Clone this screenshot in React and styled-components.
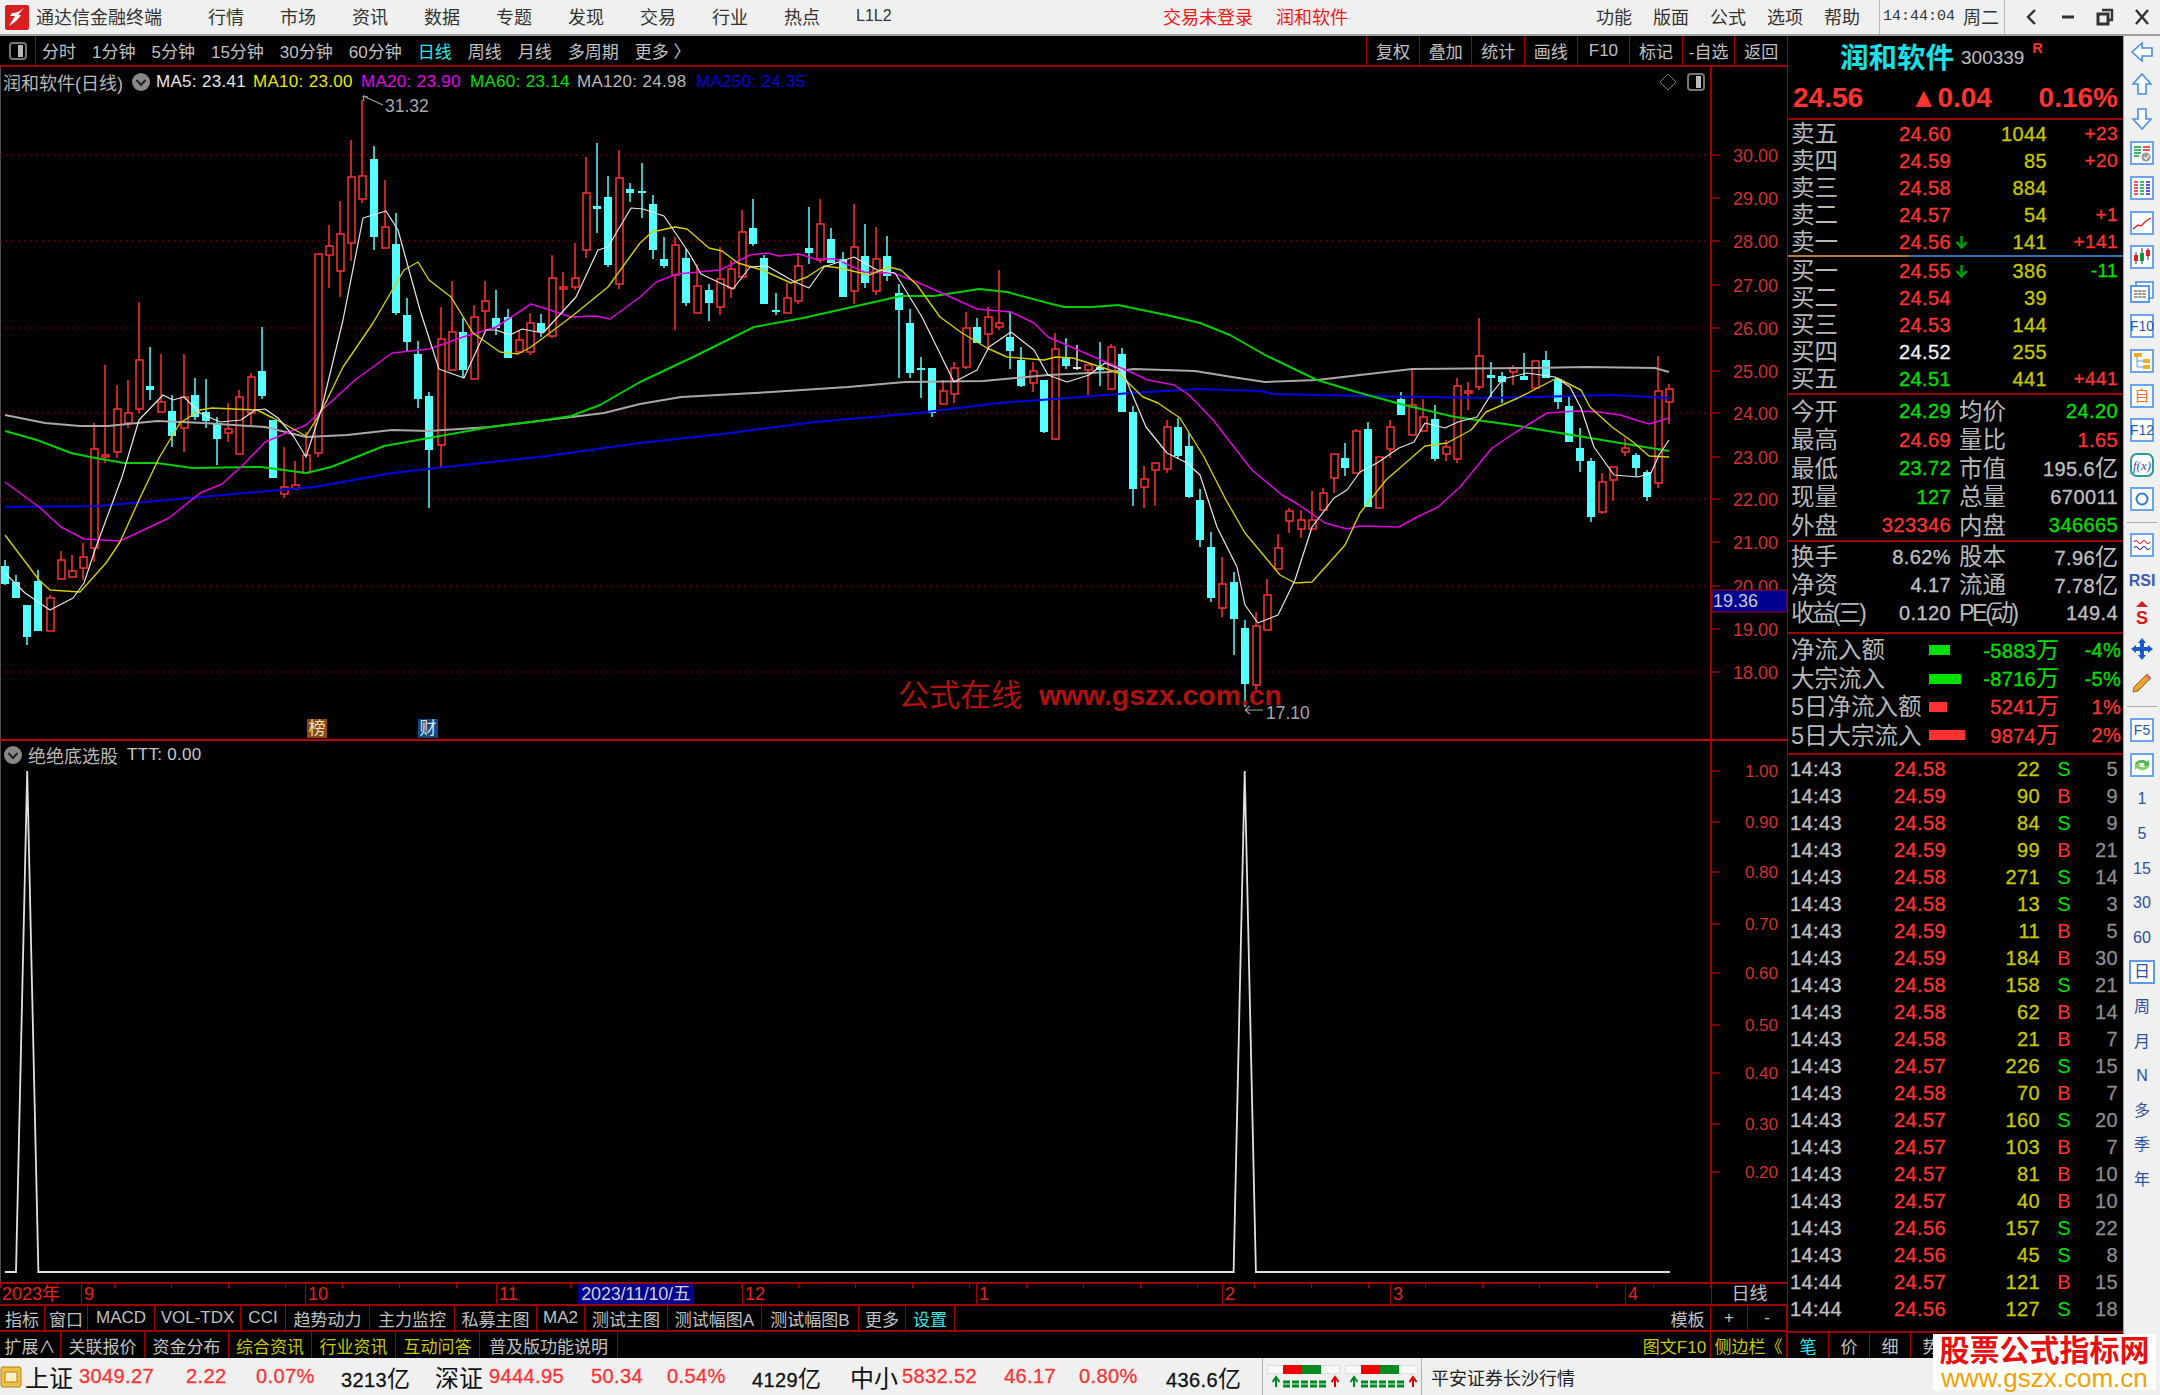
import React from 'react'
import styled, { createGlobalStyle } from 'styled-components'

const SANS = '"Liberation Sans", "Noto Sans CJK SC", sans-serif'
const RED_LINE = '#a00000'
const PRICE_RED = '#ff3232'
const PRICE_GREEN = '#00e000'
const VOL_YELLOW = '#c8c800'
const TEXT_GRAY = '#c0c0c0'

const GlobalStyle = createGlobalStyle`
  html, body { margin: 0; padding: 0; background: #000; overflow: hidden; }
  * { box-sizing: border-box; }
`

const Page = styled.div`
  width: 2160px;
  height: 1395px;
  display: flex;
  flex-direction: column;
  position: relative;
  overflow: hidden;
  font-family: ${SANS};
  background: #f0f0f0;
`
const Spacer = styled.span`
  flex: none;
  width: ${p => p.$w}px;
`

// top menu
const MenuBar = styled.div`
  height: 36px;
  flex: none;
  display: flex;
  align-items: center;
  background: #f0f0f0;
  border-bottom: 2px solid #a0a0a0;
  padding-left: 5px;
  font-size: 18px;
  color: #333;
  white-space: nowrap;
`
const AppTitle = styled.span`
  margin-left: 7px;
  margin-right: 10px;
  width: 126px;
  padding-bottom: 2px;
`
const MenuItem = styled.span`
  margin-left: 36px;
  width: 36px;
  padding-bottom: 2px;
  font-size: ${p => p.$small ? '16px' : '18px'};
`
const AlertText = styled.span`
  color: #f01818;
  margin-left: ${p => p.$ml}px;
  padding-bottom: 2px;
`
const RightMenu = styled.div`
  margin-left: auto;
  display: flex;
  align-items: center;
  height: 100%;
`
const MenuTexts = styled.div`
  display: flex;
  gap: 21px;
  padding-bottom: 2px;
`
const MenuDivider = styled.i`
  width: 1px;
  height: 100%;
  background: #b8b8b8;
  margin-left: ${p => p.$ml}px;
`
const Clock = styled.span`
  font-family: "Liberation Mono", monospace;
  font-size: 15px;
  margin-left: 3px;
  padding-bottom: 2px;
`
const WeekDay = styled.span`
  margin-left: 8px;
  padding-bottom: 2px;
`
const WindowButtons = styled.div`
  display: flex;
  margin-left: 7px;
`
const WindowButton = styled.div`
  width: 37px;
  display: flex;
  justify-content: center;
  align-items: center;
`

// main body
const Body = styled.div`
  flex: none;
  height: 1322px;
  display: flex;
`
const LeftColumn = styled.div`
  width: 1788px;
  flex: none;
  display: flex;
  flex-direction: column;
  background: #000;
  border-right: 1px solid ${RED_LINE};
`
const Toolbar = styled.div`
  height: 31px;
  flex: none;
  display: flex;
  align-items: stretch;
  border-bottom: 2px solid ${RED_LINE};
  font-size: 17px;
  color: ${TEXT_GRAY};
  white-space: nowrap;
`
const ToolIconCell = styled.div`
  width: 36px;
  flex: none;
  display: flex;
  align-items: center;
  justify-content: center;
  border-right: 1px solid ${RED_LINE};
`
const PeriodTabs = styled.div`
  display: flex;
  align-items: center;
  gap: 16px;
  padding-left: 6px;
  flex: 1;
`
const PeriodTab = styled.span`
  color: ${p => p.$active ? '#30e8e8' : TEXT_GRAY};
`
const ToolButton = styled.div`
  width: 52.6px;
  display: flex;
  align-items: center;
  justify-content: center;
  border-left: 1px solid ${RED_LINE};
`

const ChartPane = styled.div`
  position: relative;
  flex: none;
  height: ${p => p.$h}px;
  border-bottom: ${p => p.$rule ? '2px solid #c00000' : 'none'};
`
const ChartSvg = styled.svg`
  display: block;
  text { font-family: ${SANS}; }
`
const PaneHeader = styled.div`
  position: absolute;
  left: 3px;
  top: ${p => p.$top}px;
  right: 82px;
  display: flex;
  align-items: center;
  font-size: 17px;
  white-space: nowrap;
  color: ${TEXT_GRAY};
`
const MaLabel = styled.span`
  flex: none;
  color: ${p => p.$c};
  width: ${p => p.$w}px;
  margin-left: ${p => p.$ml || 0}px;
  letter-spacing: 0.3px;
`
const PaneTitle = styled.span`
  font-size: 18px;
  color: #b8b8b8;
`
const HeaderTools = styled.div`
  margin-left: auto;
  display: flex;
  align-items: center;
  gap: 10px;
`

const DateAxis = styled.div`
  height: 24px;
  flex: none;
  display: flex;
  position: relative;
  border-top: 2px solid ${RED_LINE};
  border-bottom: 2px solid ${RED_LINE};
  font-size: 18px;
  color: #e82020;
  &::before {
    content: '';
    position: absolute;
    left: 0;
    width: 1711px;
    top: 0;
    height: 4px;
    background: repeating-linear-gradient(to right, ${RED_LINE} 0 1px, transparent 1px 57px);
  }
`
const DateCell = styled.div`
  width: ${p => p.$w}px;
  flex: none;
  padding-left: 2px;
  border-left: ${p => p.$first ? 'none' : `1px solid ${RED_LINE}`};
  line-height: 21px;
`
const DateCursor = styled.div`
  position: absolute;
  left: 578px;
  top: 0;
  width: 116px;
  height: 20px;
  background: #000090;
  color: #d0d0d0;
  text-align: center;
  line-height: 21px;
  font-size: 18px;
  letter-spacing: -0.2px;
  white-space: nowrap;
`
const AxisCorner = styled.div`
  flex: 1;
  text-align: center;
  color: ${TEXT_GRAY};
  border-left: 1px solid ${RED_LINE};
  font-size: 18px;
  line-height: 20px;
`

const TabRow = styled.div`
  height: ${p => p.$h}px;
  flex: none;
  display: flex;
  font-size: 17px;
  border-bottom: ${p => p.$last ? 'none' : `2px solid ${RED_LINE}`};
  white-space: nowrap;
`
const Tab = styled.div`
  width: ${p => p.$w}px;
  flex: none;
  display: flex;
  align-items: center;
  justify-content: center;
  color: ${p => p.$c || TEXT_GRAY};
  border-right: 1px solid ${RED_LINE};
`
const TabSpacer = styled.div`
  flex: 1;
`

// quote panel
const QuotePanel = styled.div`
  width: 335px;
  flex: none;
  display: flex;
  flex-direction: column;
  background: #000;
  color: ${TEXT_GRAY};
  font-size: 20px;
  white-space: nowrap;
`
const TitleRow = styled.div`
  height: 44px;
  flex: none;
  display: flex;
  align-items: center;
  padding: 0 0 6px 52px;
`
const StockName = styled.span`
  font-size: 28.5px;
  font-weight: 700;
  color: #18e0e8;
`
const StockCode = styled.span`
  font-size: 19px;
  margin-left: 7px;
  margin-top: 6px;
`
const RightBadge = styled.sup`
  color: ${PRICE_RED};
  font-size: 14px;
  font-weight: 700;
  margin: -14px 0 0 8px;
`
const PriceRow = styled.div`
  height: 40px;
  flex: none;
  display: flex;
  align-items: center;
  justify-content: space-between;
  padding: 0 5px 2px 5px;
  color: ${PRICE_RED};
  font-size: 28px;
  font-weight: 700;
  border-bottom: 2px solid ${RED_LINE};
`
const Section = styled.div`
  flex: none;
  height: ${p => p.$h}px;
  padding-top: ${p => p.$pt || 0}px;
  border-bottom: ${p => p.$noRule ? 'none' : `2px solid ${RED_LINE}`};
`
const MidRule = styled.div`
  height: 2px;
  flex: none;
  display: flex;
  &::before { content: ''; width: 121px; background: #b08030; }
  &::after { content: ''; flex: 1; background: #3070b0; }
`
const DepthRow = styled.div`
  height: 27px;
  display: grid;
  grid-template-columns: 47px 113px 17px 79px 71px;
  align-items: center;
  padding-left: 3px;
  letter-spacing: 0.4px;
`
const Label = styled.span`
  position: relative;
  top: 1px;
  font-size: 23.5px;
  letter-spacing: ${p => p.$ls || 0}px;
  color: #b8b8b8;
  line-height: 1;
`
const Num = styled.span`
  color: ${p => p.$c || TEXT_GRAY};
  text-align: ${p => p.$left ? 'left' : 'right'};
  font-size: ${p => p.$size || 20}px;
  -webkit-text-stroke: 0.3px ${p => p.$c || TEXT_GRAY};
  line-height: 1;
`
const ArrowCell = styled.span`
  display: flex;
  justify-content: flex-end;
`
const StatRow = styled.div`
  height: ${p => p.$h}px;
  display: grid;
  grid-template-columns: 160px 159px;
  column-gap: 8px;
  align-items: center;
  padding-left: 3px;
  letter-spacing: 0.4px;
`
const StatCell = styled.div`
  display: flex;
  justify-content: space-between;
  align-items: center;
`
const Unit = styled.span`
  font-size: 23px;
  letter-spacing: 0;
  -webkit-text-stroke: 0;
`
const FlowRow = styled.div`
  height: 28.4px;
  display: grid;
  grid-template-columns: 138px 50px 80px 62px;
  align-items: center;
  padding-left: 3px;
  letter-spacing: 0.3px;
`
const FlowBar = styled.i`
  display: block;
  height: 10px;
  width: ${p => p.$w}px;
  background: ${p => p.$c};
`
const TickList = styled.div`
  flex: 1;
`
const TickRow = styled.div`
  height: 27px;
  display: grid;
  grid-template-columns: 104px 52px 94px 48px 30px;
  align-items: center;
  padding-left: 2px;
  letter-spacing: 0.4px;
`
const Side = styled.span`
  color: ${p => p.$c};
  text-align: center;
  font-size: 20px;
  line-height: 1;
`
const QuoteTabs = styled.div`
  height: 27px;
  flex: none;
  display: flex;
  border-top: 2px solid ${RED_LINE};
  font-size: 17px;
`
const QuoteTab = styled.div`
  width: 41px;
  flex: none;
  display: flex;
  align-items: center;
  justify-content: center;
  color: ${p => p.$c || TEXT_GRAY};
  border-right: 1px solid ${RED_LINE};
`

// right icon strip
const SideStrip = styled.div`
  flex: 1;
  display: flex;
  flex-direction: column;
  align-items: center;
  background: #f0f0f0;
  border-left: 1px solid #a8a8a8;
  color: #2f4f9f;
  font-size: 16px;
`
const StripItem = styled.div`
  height: ${p => p.$h || 34.6}px;
  flex: none;
  width: 100%;
  display: flex;
  align-items: center;
  justify-content: center;
`
const StripBox = styled.span`
  padding: 1px 3px;
  border: ${p => p.$on ? '2px solid #5a9ae8' : 'none'};
  line-height: 1.1;
  background: ${p => p.$on ? '#fff' : 'transparent'};
`
const StripRule = styled.div`
  height: ${p => p.$h}px;
  flex: none;
  width: 30px;
  display: flex;
  align-items: center;
  &::before { content: ''; width: 100%; height: 1px; background: #a8a8a8; }
`

// bottom status bar
const StatusBar = styled.div`
  flex: 1;
  display: flex;
  align-items: center;
  background: #f0f0f0;
  font-size: 20px;
  white-space: nowrap;
  color: #111;
`
const StatusCell = styled.div`
  width: ${p => p.$w}px;
  flex: none;
  color: ${p => p.$c || '#111'};
  font-size: ${p => p.$size || 20}px;
  letter-spacing: ${p => p.$size ? 0 : 0.4}px;
  -webkit-text-stroke: ${p => p.$size ? 0 : '0.3px'};
`
const StatusDivider = styled.i`
  width: 1px;
  height: 100%;
  background: #b0b0b0;
  flex: none;
`
const StatusGlyph = styled.svg`
  display: block;
`
const BrokerName = styled.span`
  margin-left: 9px;
  font-size: 18px;
  color: #222;
`
const Watermark = styled.div`
  position: absolute;
  left: 1933px;
  top: 1334px;
  width: 223px;
  height: 56px;
  background: #fff;
  text-align: center;
  white-space: nowrap;
`
const WatermarkTitle = styled.div`
  color: #e81010;
  font-size: 30px;
  font-weight: 700;
  line-height: 33px;
`
const WatermarkUrl = styled.div`
  color: #f5a000;
  font-family: "Liberation Sans", sans-serif;
  font-size: 26px;
  line-height: 23px;
`

// [kind (0 up, 1 down, 2 white cross), high, bodyTop, bodyBottom, low] in page pixels
const CANDLES = [
  [1,560,566,584,585],[1,575,582,598,598],[1,605,605,637,645],[1,570,581,631,631],[0,595,598,631,631],
  [0,551,560,579,579],[0,555,571,577,577],[0,543,557,568,580],[0,423,449,548,562],[0,365,455,457,463],
  [0,385,409,452,458],[0,380,413,423,428],[0,302,360,409,413],[1,347,386,390,400],[0,354,402,412,412],
  [1,395,411,436,447],[0,354,397,428,452],[1,378,395,417,420],[1,379,412,421,428],[1,417,423,439,465],
  [0,403,429,433,442],[0,390,397,454,454],[0,373,377,413,427],[1,327,371,396,399],[1,420,420,478,478],
  [0,447,487,494,498],[0,461,485,489,489],[0,432,455,473,473],[0,254,254,453,457],[0,225,246,255,288],
  [0,201,234,271,297],[0,140,177,243,261],[0,100,176,199,203],[1,146,159,237,250],[0,180,227,248,248],
  [1,213,244,313,315],[1,298,315,342,351],[1,341,354,399,408],[1,392,396,450,508],[0,307,339,445,467],
  [0,281,332,370,370],[1,318,332,370,378],[0,305,317,379,379],[0,281,301,311,330],[1,290,318,328,335],
  [1,309,317,358,358],[0,330,340,352,353],[0,313,323,352,355],[1,314,323,332,337],[0,255,278,336,338],
  [0,272,287,289,313],[0,243,278,287,290],[0,157,193,250,258],[1,143,206,209,233],[1,176,197,265,267],
  [0,150,178,284,289],[1,183,189,193,202],[1,163,191,193,218],[1,195,204,250,259],[1,237,259,266,268],
  [0,237,245,275,330],[1,249,258,303,306],[0,264,286,313,313],[1,284,290,303,321],[0,247,279,307,315],
  [0,260,269,288,298],[0,210,232,277,277],[1,199,228,244,246],[1,255,258,304,304],[1,293,310,312,315],
  [0,283,298,313,313],[0,253,266,301,304],[1,207,248,253,264],[0,199,224,260,263],[1,228,239,263,263],
  [1,252,259,297,297],[0,204,247,291,304],[1,224,256,283,288],[0,227,259,291,295],[1,236,256,276,281],
  [1,284,293,310,378],[1,309,323,373,378],[1,357,368,369,398],[1,368,368,413,417],[0,380,391,404,404],
  [0,362,368,394,403],[0,312,328,367,369],[1,318,327,343,343],[0,307,317,334,350],[0,270,323,327,330],
  [1,311,337,351,369],[1,347,360,386,387],[0,362,371,383,392],[1,380,380,432,433],[0,333,349,439,439],
  [1,338,357,366,369],[2,345,367,368,370],[0,365,365,370,395],[1,342,367,370,386],[0,344,347,389,389],
  [1,348,354,412,412],[1,406,412,489,506],[0,466,479,487,508],[0,463,463,470,506],[0,420,427,469,473],
  [1,418,427,456,459],[1,433,446,497,498],[1,489,500,540,547],[1,532,547,598,602],[0,557,584,608,617],
  [1,572,582,619,655],[1,620,628,684,707],[0,612,626,685,690],[0,579,595,630,630],[0,534,548,569,569],
  [0,508,511,521,533],[0,510,520,529,538],[0,491,520,529,529],[0,488,493,510,510],[0,454,454,478,493],
  [1,443,458,468,476],[0,429,431,473,473],[1,422,429,507,507],[0,457,457,508,508],[0,420,427,449,458],
  [1,392,399,415,415],[0,368,405,435,435],[0,399,417,431,431],[1,405,419,459,461],[0,440,447,454,461],
  [0,378,386,459,463],[0,382,391,392,410],[0,318,356,387,390],[1,362,375,378,397],[1,372,376,382,403],
  [0,365,368,372,385],[1,353,376,380,380],[0,361,361,388,388],[1,351,360,378,378],[1,378,379,402,409],
  [1,397,406,442,442],[1,428,448,461,472],[1,458,461,517,522],[0,473,482,512,514],[0,467,467,480,501],
  [0,438,448,452,456],[1,453,455,468,477],[1,470,472,497,501],[0,356,391,483,488],[0,384,389,402,424],
]
const candleX = i => 4.9 + 11.17 * i

const MA_LINES = [
  { color: '#a8a8a8', w: 2, pts: '5,415 45,423 80,426 108,426 157,421 204,423 265,427 306,437 347,435 392,430 429,431 490,427 547,420 604,413 640,404 681,397 771,392 848,387 905,382 983,381 1048,375 1109,372 1134,369 1195,371 1232,377 1265,382 1317,380 1360,375 1412,369 1534,368 1586,367 1655,368 1669,372' },
  { color: '#0000e8', w: 2, pts: '5,507 98,506 167,500 245,493 314,487 392,473 445,467 547,456 640,443 722,434 815,422 918,413 999,403 1081,397 1130,393 1199,389 1260,391 1273,394 1360,396 1490,398 1612,395 1669,398' },
  { color: '#00d000', w: 2, pts: '5,431 37,440 71,453 90,457 124,463 157,463 192,468 261,467 306,473 331,467 384,446 429,438 490,427 539,421 571,416 600,405 640,382 693,357 754,327 803,318 852,307 901,296 934,296 979,289 1007,292 1048,303 1064,307 1093,307 1118,305 1171,316 1200,323 1230,335 1265,355 1317,380 1360,393 1404,405 1455,417 1512,425 1560,433 1620,443 1669,451' },
  { color: '#e000e0', w: 1.5, pts: '5,482 39,507 61,527 84,539 120,541 169,518 200,493 222,484 245,463 265,442 306,425 322,410 355,380 392,353 429,349 463,337 496,327 531,304 571,317 596,316 610,319 640,297 656,282 677,274 720,270 750,255 767,253 779,256 799,254 815,259 836,259 864,272 893,273 917,282 946,295 977,309 1011,312 1034,323 1048,337 1101,360 1126,370 1148,380 1174,385 1189,395 1213,420 1230,442 1252,470 1282,495 1299,505 1325,523 1347,529 1360,526 1399,527 1417,517 1438,507 1460,487 1492,448 1516,432 1547,413 1577,411 1599,412 1620,415 1649,424 1669,418' },
  { color: '#d0d000', w: 1.4, pts: '5,535 39,580 50,590 80,592 106,563 120,542 139,500 159,458 180,423 200,410 212,408 257,410 273,418 286,425 306,436 322,410 343,367 373,323 404,270 418,262 429,280 451,297 473,333 500,352 518,354 531,347 571,317 608,287 640,243 652,232 675,227 687,229 709,248 722,251 738,263 762,270 791,283 807,277 824,266 840,268 869,275 889,267 901,270 917,285 940,317 962,333 987,348 1007,357 1044,360 1056,357 1073,358 1101,367 1118,373 1143,397 1158,403 1180,418 1204,457 1226,500 1245,533 1280,575 1295,583 1312,582 1345,545 1360,513 1386,480 1425,446 1447,443 1471,430 1486,412 1518,398 1557,378 1581,390 1590,407 1612,427 1633,442 1649,456 1669,457' },
  { color: '#e8e8e8', w: 1.2, pts: '5,573 25,593 50,610 73,598 84,583 96,547 122,477 139,420 163,395 173,400 184,397 200,413 220,422 241,420 255,410 265,409 278,418 294,437 306,457 322,407 343,320 363,218 386,211 398,230 420,310 439,369 464,378 486,330 496,330 510,335 522,329 543,333 576,297 598,250 608,247 631,208 643,209 664,216 689,253 701,274 733,289 750,267 767,266 795,282 809,288 824,267 854,257 877,270 895,273 922,317 954,382 977,370 989,347 1011,332 1034,350 1048,375 1067,382 1089,375 1105,363 1122,370 1146,427 1167,453 1187,463 1200,475 1217,527 1237,567 1245,605 1258,623 1278,615 1295,580 1312,527 1334,498 1347,490 1360,472 1377,463 1399,448 1414,442 1425,423 1445,428 1458,422 1477,417 1492,393 1503,379 1527,373 1555,377 1570,387 1581,408 1594,447 1614,475 1638,477 1651,473 1659,455 1669,440' },
]

const PRICE_LABELS = [
  [155, '30.00'], [198, '29.00'], [241, '28.00'], [285, '27.00'], [328, '26.00'], [371, '25.00'], [413, '24.00'],
  [457, '23.00'], [499, '22.00'], [542, '21.00'], [586, '20.00'], [629, '19.00'], [672, '18.00'],
]
const GRID_YS = [155, 241, 328, 413, 499, 586, 672]
const SIGNAL_LABELS = [
  [771, '1.00'], [822, '0.90'], [872, '0.80'], [924, '0.70'], [973, '0.60'],
  [1025, '0.50'], [1073, '0.40'], [1124, '0.30'], [1172, '0.20'],
]

const Candle = ({ c, i }) => {
  const [kind, high, top, bottom, low] = c
  const x = Math.round(candleX(i))
  if (kind === 0) {
    return (
      <g stroke="#ff3232" strokeWidth="1.5" fill="none">
        {high < top && <line x1={x} x2={x} y1={high} y2={top} />}
        {low > bottom && <line x1={x} x2={x} y1={bottom} y2={low} />}
        <rect x={x - 3} y={top} width="7" height={Math.max(bottom - top, 2)} fill="#000" />
      </g>
    )
  }
  const color = kind === 2 ? '#e0e0e0' : '#54ffff'
  return (
    <g>
      <line x1={x} x2={x} y1={high} y2={low} stroke={color} strokeWidth="1.5" />
      <rect x={x - 4} y={top} width="8" height={Math.max(bottom - top, 2)} fill={color} />
    </g>
  )
}

const PriceChart = () => (
  <ChartSvg width="1787" height="672" viewBox="0 67 1787 672">
    <line x1="0.5" x2="0.5" y1="67" y2="740" stroke="#505050" />
    {GRID_YS.map(y => (
      <line key={y} x1="0" x2="1711" y1={y} y2={y} stroke="#a00000" strokeWidth="1" strokeDasharray="1.5 4.5" />
    ))}
    {CANDLES.map((c, i) => <Candle key={i} c={c} i={i} />)}
    {MA_LINES.map(m => (
      <polyline key={m.color} points={m.pts} fill="none" stroke={m.color} strokeWidth={m.w} strokeLinejoin="round" />
    ))}
    <line x1="1711" x2="1711" y1="67" y2="740" stroke="#a00000" strokeWidth="2" />
    {PRICE_LABELS.map(([y, t]) => (
      <g key={t}>
        <line x1="1711" x2="1720" y1={y} y2={y} stroke="#a00000" strokeWidth="1.5" />
        <text x="1778" y={y + 7} textAnchor="end" fontSize="18" fill="#d03030">{t}</text>
      </g>
    ))}
    <rect x="1712" y="590" width="75" height="22" fill="#000090" stroke="#a00000" />
    <text x="1713" y="607" fontSize="18" fill="#c8c8c8">19.36</text>

    <path d="M364 101 l-1 -5 M363 96 l5 1 M363 96 l20 9" stroke="#a0a0a0" strokeWidth="1.2" fill="none" />
    <text x="385" y="112" fontSize="17.5" fill="#a8a8a8">31.32</text>
    <path d="M1245 710 h18 M1245 710 l5 -4 M1245 710 l5 4" stroke="#a0a0a0" strokeWidth="1.2" fill="none" />
    <text x="1266" y="719" fontSize="17.5" fill="#a8a8a8">17.10</text>

    <text x="898" y="706" fontSize="31" fill="#b01010">公式在线</text>
    <text x="1039" y="705" fontSize="28.3" fontWeight="700" fill="#b01010">www.gszx.com.cn</text>

    <rect x="307" y="719" width="20" height="19" fill="#8a4a10" />
    <text x="317" y="734" fontSize="17" fill="#e8e0d0" textAnchor="middle">榜</text>
    <rect x="418" y="719" width="20" height="19" fill="#104a80" />
    <text x="428" y="734" fontSize="17" fill="#e0e8f0" textAnchor="middle">财</text>
  </ChartSvg>
)

const SignalChart = () => (
  <ChartSvg width="1787" height="541" viewBox="0 741 1787 541">
    <line x1="0.5" x2="0.5" y1="741" y2="1282" stroke="#505050" />
    <polyline
      points="5,1272 16,1272 27.2,771 38.4,1272 1233.6,1272 1244.7,771 1255.9,1272 1670,1272"
      fill="none"
      stroke="#e0e0e0"
      strokeWidth="1.8"
    />
    <line x1="1711" x2="1711" y1="741" y2="1282" stroke="#a00000" strokeWidth="2" />
    {SIGNAL_LABELS.map(([y, t]) => (
      <g key={t}>
        <line x1="1711" x2="1720" y1={y} y2={y} stroke="#a00000" strokeWidth="1.5" />
        <text x="1778" y={y + 6} textAnchor="end" fontSize="17" fill="#d03030">{t}</text>
      </g>
    ))}
  </ChartSvg>
)

const PaneToggle = () => (
  <svg width="20" height="20" viewBox="0 0 20 20">
    <circle cx="10" cy="10" r="9" fill="#888" />
    <path d="M5.5 8 L10 13 L14.5 8" stroke="#222" strokeWidth="2" fill="none" />
  </svg>
)

const PanelGlyph = () => (
  <svg width="18" height="18" viewBox="0 0 18 18">
    <rect x="1" y="1" width="16" height="16" rx="3" fill="none" stroke="#777" strokeWidth="2" />
    <rect x="9" y="3" width="5" height="12" fill="#bbb" />
  </svg>
)

const Logo = () => (
  <svg width="24" height="25" viewBox="0 0 24 25">
    <rect width="24" height="25" rx="2" fill="#d81e1e" />
    <path d="M19 3 C14 7 11 8 7 8 L5 11 L10 11 L4 21 C10 17 14 14 16 10 L13 10 Z" fill="#fff" />
  </svg>
)

const PERIODS = ['分时', '1分钟', '5分钟', '15分钟', '30分钟', '60分钟', '日线', '周线', '月线', '多周期', '更多 〉']
const TOOLS = ['复权', '叠加', '统计', '画线', 'F10', '标记', '-自选', '返回']
const MAS = [
  ['MA5: 23.41', '#e8e8e8', 97],
  ['MA10: 23.00', '#e8e800', 108],
  ['MA20: 23.90', '#e800e8', 109],
  ['MA60: 23.14', '#00e000', 107],
  ['MA120: 24.98', '#b8b8b8', 119],
  ['MA250: 24.35', '#0000e8', 120],
]
const DATE_CELLS = [[81, '2023年'], [224, '9'], [191, '10'], [246, '11'], [234, '12'], [246, '1'], [168, '2'], [235, '3'], [86, '4']]
const TABS_A = [
  [45, '指标'], [43, '窗口'], [67, 'MACD'], [86, 'VOL-TDX'], [45, 'CCI'], [84, '趋势动力'], [85, '主力监控'], [82, '私募主图'],
  [48, 'MA2'], [83, '测试主图'], [94, '测试幅图A'], [97, '测试幅图B'], [47, '更多'], [49, '设置', '#30e8e8'],
]
const TABS_B = [
  [61, '扩展∧'], [84, '关联报价'], [84, '资金分布'], [83, '综合资讯', VOL_YELLOW], [84, '行业资讯', VOL_YELLOW],
  [84, '互动问答', VOL_YELLOW], [138, '普及版功能说明'],
]

const ASKS = [
  ['卖五', '24.60', '', '1044', '+23'],
  ['卖四', '24.59', '', '85', '+20'],
  ['卖三', '24.58', '', '884', ''],
  ['卖二', '24.57', '', '54', '+1'],
  ['卖一', '24.56', 'down', '141', '+141'],
]
const BIDS = [
  ['买一', '24.55', 'down', '386', '-11', PRICE_RED],
  ['买二', '24.54', '', '39', '', PRICE_RED],
  ['买三', '24.53', '', '144', '', PRICE_RED],
  ['买四', '24.52', '', '255', '', '#f0f0f0'],
  ['买五', '24.51', '', '441', '+441', PRICE_GREEN],
]
const STATS_A = [
  ['今开', '24.29', PRICE_GREEN, '均价', '24.20', PRICE_GREEN],
  ['最高', '24.69', PRICE_RED, '量比', '1.65', PRICE_RED],
  ['最低', '23.72', PRICE_GREEN, '市值', '195.6亿', TEXT_GRAY],
  ['现量', '127', PRICE_GREEN, '总量', '670011', TEXT_GRAY],
  ['外盘', '323346', PRICE_RED, '内盘', '346665', PRICE_GREEN],
]
const STATS_B = [
  ['换手', '8.62%', TEXT_GRAY, '股本', '7.96亿', TEXT_GRAY],
  ['净资', '4.17', TEXT_GRAY, '流通', '7.78亿', TEXT_GRAY],
  ['收益(三)', '0.120', TEXT_GRAY, 'PE(动)', '149.4', TEXT_GRAY],
]
const FLOWS = [
  ['净流入额', 21, '-5883', '-4%', PRICE_GREEN],
  ['大宗流入', 32, '-8716', '-5%', PRICE_GREEN],
  ['5日净流入额', 18, '5241', '1%', PRICE_RED],
  ['5日大宗流入', 36, '9874', '2%', PRICE_RED],
]
const TICKS = [
  ['14:43', '24.58', '22', 'S', '5'], ['14:43', '24.59', '90', 'B', '9'], ['14:43', '24.58', '84', 'S', '9'],
  ['14:43', '24.59', '99', 'B', '21'], ['14:43', '24.58', '271', 'S', '14'], ['14:43', '24.58', '13', 'S', '3'],
  ['14:43', '24.59', '11', 'B', '5'], ['14:43', '24.59', '184', 'B', '30'], ['14:43', '24.58', '158', 'S', '21'],
  ['14:43', '24.58', '62', 'B', '14'], ['14:43', '24.58', '21', 'B', '7'], ['14:43', '24.57', '226', 'S', '15'],
  ['14:43', '24.58', '70', 'B', '7'], ['14:43', '24.57', '160', 'S', '20'], ['14:43', '24.57', '103', 'B', '7'],
  ['14:43', '24.57', '81', 'B', '10'], ['14:43', '24.57', '40', 'B', '10'], ['14:43', '24.56', '157', 'S', '22'],
  ['14:43', '24.56', '45', 'S', '8'], ['14:44', '24.57', '121', 'B', '15'], ['14:44', '24.56', '127', 'S', '18'],
]

const DownArrow = () => (
  <svg width="13" height="14" viewBox="0 0 13 14">
    <path d="M6.5 1 V12 M1.5 7 L6.5 12.5 L11.5 7" stroke="#00a000" strokeWidth="2.4" fill="none" />
  </svg>
)

const Valued = ({ text, c }) => {
  // 亿 is drawn larger than the digits in front of it
  if (text.endsWith('亿')) {
    return <Num $c={c}>{text.slice(0, -1)}<Unit>亿</Unit></Num>
  }
  return <Num $c={c}>{text}</Num>
}

const DepthRows = ({ rows }) => rows.map(([label, price, arrow, vol, delta, color]) => (
  <DepthRow key={label}>
    <Label>{label}</Label>
    <Num $c={color || PRICE_RED}>{price}</Num>
    <ArrowCell>{arrow && <DownArrow />}</ArrowCell>
    <Num $c={VOL_YELLOW}>{vol}</Num>
    <Num $c={delta.startsWith('-') ? PRICE_GREEN : PRICE_RED} $size={19}>{delta}</Num>
  </DepthRow>
))

const tightLabel = t => (t.includes('(') ? -2.6 : 0)

const StatRows = ({ rows, h }) => rows.map(([l1, v1, c1, l2, v2, c2]) => (
  <StatRow key={l1} $h={h}>
    <StatCell><Label $ls={tightLabel(l1)}>{l1}</Label><Valued text={v1} c={c1} /></StatCell>
    <StatCell><Label $ls={tightLabel(l2)}>{l2}</Label><Valued text={v2} c={c2} /></StatCell>
  </StatRow>
))

const BLUE = '#4a90e8'
const Boxed = ({ children, rx = 0 }) => (
  <svg width="24" height="24" viewBox="0 0 24 24">
    <rect x="1" y="1" width="22" height="22" rx={rx} fill="#fff" stroke="#6aa4ec" strokeWidth="2" />
    {children}
  </svg>
)
const BoxedText = ({ t, c = '#2f55b0', size = 14, w = 400 }) => (
  <Boxed>
    <text x="12" y="17" textAnchor="middle" fontSize={size} fill={c} fontWeight={w} fontFamily="Liberation Sans, Noto Sans CJK SC, sans-serif">{t}</text>
  </Boxed>
)
const Arrow = ({ rotate }) => (
  <svg width="24" height="24" viewBox="0 0 24 24">
    <path d="M2 12 L12 3 V8 H22 V16 H12 V21 Z" fill="#fff" stroke={BLUE} strokeWidth="1.6" transform={`rotate(${rotate} 12 12)`} />
  </svg>
)

const ICONS = [
  <Arrow rotate={0} />,
  <Arrow rotate={90} />,
  <Arrow rotate={270} />,
  <Boxed>
    <path d="M4 6h7M4 9h7M4 12h7M4 15h5" stroke="#0a9a3a" strokeWidth="1.5" />
    <path d="M13 6h7M13 9h7" stroke="#e02020" strokeWidth="1.5" />
    <circle cx="16" cy="16" r="4.5" fill="#999" />
    <path d="M14 16 l2 2 l3 -4" stroke="#fff" strokeWidth="1.2" fill="none" />
  </Boxed>,
  <Boxed>
    <path d="M4 6h4M4 9h4M4 12h4M4 15h4M4 18h4" stroke="#e02020" strokeWidth="1.5" />
    <path d="M10 6h4M10 9h4M10 12h4M10 15h4M10 18h4" stroke="#0a9a3a" strokeWidth="1.5" />
    <path d="M16 6h4M16 9h4M16 12h4M16 15h4M16 18h4" stroke="#2020d0" strokeWidth="1.5" />
  </Boxed>,
  <Boxed><polyline points="3,18 8,14 11,15 16,10 21,7" stroke="#e02020" strokeWidth="1.4" fill="none" /></Boxed>,
  <Boxed>
    <path d="M6 7v12M12 3v16M18 3v12" stroke="#333" strokeWidth="1" />
    <rect x="4" y="10" width="4" height="6" fill="#e02020" />
    <rect x="10" y="8" width="4" height="8" fill="#0a9a3a" />
    <rect x="16" y="5" width="4" height="6" fill="#e02020" />
  </Boxed>,
  <svg width="26" height="24" viewBox="0 0 26 24">
    <rect x="7" y="2" width="17" height="16" fill="#fff" stroke={BLUE} strokeWidth="1.6" />
    <rect x="2" y="6" width="18" height="16" fill="#fff" stroke={BLUE} strokeWidth="1.8" />
    <path d="M5 11h12M5 14h12M5 17h12" stroke="#777" strokeWidth="1.5" strokeDasharray="3.4 .8" />
  </svg>,
  <BoxedText t="F10" />,
  <Boxed>
    <rect x="4" y="4" width="8" height="4" fill="#f0b020" />
    <rect x="13" y="10" width="7" height="4" fill="#f0b020" />
    <rect x="13" y="16" width="7" height="4" fill="#f0b020" />
    <path d="M7 8v10h6M7 12h6" stroke="#5a9ae8" strokeWidth="1" fill="none" />
  </Boxed>,
  <BoxedText t="自" c="#f07030" size={15} />,
  <BoxedText t="F12" />,
  <svg width="24" height="24" viewBox="0 0 24 24">
    <rect x="1" y="1" width="22" height="22" rx="6" fill="#fff" stroke="#2a9a9a" strokeWidth="2" />
    <text x="12" y="17" textAnchor="middle" fontSize="13" fontStyle="italic" fill="#2f55b0" fontFamily="Liberation Serif, serif">f(x)</text>
  </svg>,
  <Boxed><circle cx="12" cy="12" r="5.5" fill="none" stroke="#2a7ad0" strokeWidth="2" /></Boxed>,
  'rule-a',
  <Boxed>
    <path d="M4 9 q2 -3 4 0 t4 0 t4 0 t4 0" stroke="#e02020" strokeWidth="1.2" fill="none" />
    <path d="M4 15 q2 -3 4 0 t4 0 t4 0 t4 0" stroke="#2020d0" strokeWidth="1.2" fill="none" />
  </Boxed>,
  <svg width="30" height="20" viewBox="0 0 30 20">
    <text x="15" y="16" textAnchor="middle" fontSize="16" fontWeight="700" fill="#3a5ab8" fontFamily="Liberation Sans, sans-serif">RSI</text>
  </svg>,
  <svg width="24" height="28" viewBox="0 0 24 28">
    <path d="M12 1 L18 7 H6 Z" fill="#d02020" />
    <text x="12" y="24" textAnchor="middle" fontSize="18" fontWeight="700" fill="#d02020" fontFamily="Liberation Sans, sans-serif">S</text>
  </svg>,
  <svg width="24" height="24" viewBox="0 0 24 24">
    <path d="M12 1 L16 6 H14 V10 H18 V8 L23 12 L18 16 V14 H14 V18 H16 L12 23 L8 18 H10 V14 H6 V16 L1 12 L6 8 V10 H10 V6 H8 Z" fill="#1a5ac8" />
  </svg>,
  <svg width="24" height="24" viewBox="0 0 24 24">
    <path d="M17 3 L21 7 L8 20 L3 21 L4 16 Z" fill="#f0a030" stroke="#a06a20" strokeWidth="1" />
    <path d="M17 3 L21 7 L19 9 L15 5 Z" fill="#e07070" />
  </svg>,
  'rule-b',
  <BoxedText t="F5" />,
  <Boxed>
    <path d="M5 11 a7 6 0 0 1 12 -2 l2 -2 v6 h-6 l2 -2 a5 4 0 0 0 -8 1 Z" fill="#50b850" />
    <path d="M19 13 a7 6 0 0 1 -12 2 l-2 2 v-6 h6 l-2 2 a5 4 0 0 0 8 -1 Z" fill="#80cc60" />
  </Boxed>,
]
const STRIP_TEXT = [['1'], ['5'], ['15'], ['30'], ['60'], ['日', true], ['周'], ['月'], ['N'], ['多'], ['季'], ['年']]

const IndexMiniChart = () => (
  <svg width="73" height="24" viewBox="0 0 73 24">
    <rect x="0.5" y="0.5" width="72" height="8" fill="#f8f8f8" stroke="#ddd" />
    <rect x="16" y="0" width="19" height="9" fill="#f00000" />
    <rect x="35" y="0" width="19" height="9" fill="#008a20" />
    <path d="M9 22 V14 M5.5 17 L9 12 L12.5 17" stroke="#008a20" strokeWidth="2" fill="none" />
    <path d="M16 17 h43" stroke="#008a20" strokeWidth="3" strokeDasharray="7 2" />
    <path d="M16 21 h43" stroke="#008a20" strokeWidth="3" strokeDasharray="7 2" />
    <path d="M68 22 V14 M64.5 17 L68 12 L71.5 17" stroke="#e00000" strokeWidth="2" fill="none" />
  </svg>
)

const STATUS = [
  [54, '上证', 24], [107, '3049.27', 0, PRICE_RED], [70, '2.22', 0, PRICE_RED], [85, '0.07%', 0, PRICE_RED], [94, '3213亿', 0],
  [54, '深证', 24], [102, '9444.95', 0, PRICE_RED], [76, '50.34', 0, PRICE_RED], [85, '0.54%', 0, PRICE_RED], [98, '4129亿', 0],
  [52, '中小', 24], [102, '5832.52', 0, PRICE_RED], [75, '46.17', 0, PRICE_RED], [87, '0.80%', 0, PRICE_RED], [96, '436.6亿', 0],
]

export default function App() {
  return (
    <Page>
      <GlobalStyle />
      <MenuBar>
        <Logo />
        <AppTitle>通达信金融终端</AppTitle>
        {['行情', '市场', '资讯', '数据', '专题', '发现', '交易', '行业', '热点'].map(m => <MenuItem key={m}>{m}</MenuItem>)}
        <MenuItem $small>L1L2</MenuItem>
        <AlertText $ml={271}>交易未登录</AlertText>
        <AlertText $ml={23}>润和软件</AlertText>
        <RightMenu>
          <MenuTexts>
            {['功能', '版面', '公式', '选项', '帮助'].map(m => <span key={m}>{m}</span>)}
          </MenuTexts>
          <MenuDivider $ml={19} />
          <Clock>14:44:04</Clock>
          <WeekDay>周二</WeekDay>
          <MenuDivider $ml={5} />
          <WindowButtons>
            <WindowButton>
              <svg width="14" height="20" viewBox="0 0 14 20"><path d="M11 3 L4 10 L11 17" stroke="#333" strokeWidth="2.4" fill="none" /></svg>
            </WindowButton>
            <WindowButton>
              <svg width="14" height="14" viewBox="0 0 14 14"><path d="M1 7 H13" stroke="#333" strokeWidth="3" /></svg>
            </WindowButton>
            <WindowButton>
              <svg width="18" height="18" viewBox="0 0 18 18">
                <path d="M6 2 H16 V12 H12" stroke="#333" strokeWidth="2.4" fill="none" />
                <rect x="2" y="6" width="10" height="10" stroke="#333" strokeWidth="3" fill="none" />
              </svg>
            </WindowButton>
            <WindowButton>
              <svg width="16" height="18" viewBox="0 0 16 18"><path d="M2 2 L14 16 M14 2 L2 16" stroke="#333" strokeWidth="2.4" /></svg>
            </WindowButton>
          </WindowButtons>
        </RightMenu>
      </MenuBar>

      <Body>
        <LeftColumn>
          <Toolbar>
            <ToolIconCell><PanelGlyph /></ToolIconCell>
            <PeriodTabs>
              {PERIODS.map(p => <PeriodTab key={p} $active={p === '日线'}>{p}</PeriodTab>)}
            </PeriodTabs>
            {TOOLS.map(t => <ToolButton key={t}>{t}</ToolButton>)}
          </Toolbar>

          <ChartPane $h={674} $rule>
            <PriceChart />
            <PaneHeader $top={2}>
              <PaneTitle>润和软件(日线)</PaneTitle>
              <Spacer $w={8} />
              <PaneToggle />
              <Spacer $w={5} />
              {MAS.map(([t, c, w]) => <MaLabel key={t} $c={c} $w={w}>{t}</MaLabel>)}
              <HeaderTools>
                <svg width="18" height="18" viewBox="0 0 18 18"><path d="M9 1 L17 9 L9 17 L1 9 Z" stroke="#777" fill="none" /></svg>
                <PanelGlyph />
              </HeaderTools>
            </PaneHeader>
          </ChartPane>

          <ChartPane $h={541}>
            <SignalChart />
            <PaneHeader $top={1}>
              <PaneToggle />
              <PaneTitle>&nbsp;绝绝底选股</PaneTitle>
              <MaLabel $c="#c8c8c8" $ml={9}>TTT: 0.00</MaLabel>
            </PaneHeader>
          </ChartPane>

          <DateAxis>
            {DATE_CELLS.map(([w, t], i) => <DateCell key={t} $w={w} $first={i === 0}>{t}</DateCell>)}
            <AxisCorner>日线</AxisCorner>
            <DateCursor>2023/11/10/五</DateCursor>
          </DateAxis>

          <TabRow $h={26}>
            {TABS_A.map(([w, t, c]) => <Tab key={t} $w={w} $c={c}>{t}</Tab>)}
            <TabSpacer />
            <Tab $w={46}>模板</Tab>
            <Tab $w={37}>+</Tab>
            <Tab $w={39}>-</Tab>
          </TabRow>

          <TabRow $h={27} $last>
            {TABS_B.map(([w, t, c]) => <Tab key={t} $w={w} $c={c}>{t}</Tab>)}
            <TabSpacer />
            <Tab $w={72} $c={VOL_YELLOW}>图文F10</Tab>
            <Tab $w={76} $c={VOL_YELLOW}>侧边栏《</Tab>
          </TabRow>
        </LeftColumn>

        <QuotePanel>
          <TitleRow>
            <StockName>润和软件</StockName>
            <StockCode>300339</StockCode>
            <RightBadge>R</RightBadge>
          </TitleRow>
          <PriceRow>
            <span>24.56</span>
            <span>▲0.04</span>
            <span>0.16%</span>
          </PriceRow>
          <Section $h={135} $noRule><DepthRows rows={ASKS} /></Section>
          <MidRule />
          <Section $h={138}><DepthRows rows={BIDS} /></Section>
          <Section $h={147} $pt={2}><StatRows rows={STATS_A} h={28.5} /></Section>
          <Section $h={92} $pt={1}><StatRows rows={STATS_B} h={28} /></Section>
          <Section $h={121} $pt={2}>
            {FLOWS.map(([label, w, v, pct, c]) => (
              <FlowRow key={label}>
                <Label>{label}</Label>
                <FlowBar $w={w} $c={c} />
                <Num $c={c}>{v}<Unit>万</Unit></Num>
                <Num $c={c}>{pct}</Num>
              </FlowRow>
            ))}
          </Section>
          <TickList>
            {TICKS.map(([time, price, vol, side, count], i) => (
              <TickRow key={i}>
                <Num $left $c="#c0c0c0">{time}</Num>
                <Num $c={PRICE_RED}>{price}</Num>
                <Num $c={VOL_YELLOW}>{vol}</Num>
                <Side $c={side === 'S' ? PRICE_GREEN : PRICE_RED}>{side}</Side>
                <Num $c="#8c8c8c">{count}</Num>
              </TickRow>
            ))}
          </TickList>
          <QuoteTabs>
            <QuoteTab $c="#30e8e8">笔</QuoteTab>
            <QuoteTab>价</QuoteTab>
            <QuoteTab>细</QuoteTab>
            <QuoteTab>势</QuoteTab>
          </QuoteTabs>
        </QuotePanel>

        <SideStrip>
          {ICONS.map((icon, i) => {
            if (typeof icon === 'string') return <StripRule key={i} $h={icon === 'rule-a' ? 11 : 12} />
            return <StripItem key={i} $h={i === 0 ? 31 : undefined}>{icon}</StripItem>
          })}
          {STRIP_TEXT.map(([t, on]) => (
            <StripItem key={t}><StripBox $on={on}>{t}</StripBox></StripItem>
          ))}
        </SideStrip>
      </Body>

      <StatusBar>
        <StatusCell $w={25}>
          <StatusGlyph width="22" height="24" viewBox="0 0 22 24">
            <rect x="1" y="2" width="20" height="20" rx="2" fill="#f0c040" stroke="#b08020" />
            <rect x="5" y="7" width="12" height="10" fill="#fff0c0" stroke="#b08020" />
          </StatusGlyph>
        </StatusCell>
        {STATUS.map(([w, t, size, c]) => (
          <StatusCell key={t} $w={w} $c={c} $size={size}>
            {t.endsWith('亿') ? <>{t.slice(0, -1)}<Unit>亿</Unit></> : t}
          </StatusCell>
        ))}
        <StatusDivider />
        <Spacer $w={4} />
        <IndexMiniChart />
        <Spacer $w={5} />
        <IndexMiniChart />
        <Spacer $w={3} />
        <StatusDivider />
        <BrokerName>平安证券长沙行情</BrokerName>
      </StatusBar>

      <Watermark>
        <WatermarkTitle>股票公式指标网</WatermarkTitle>
        <WatermarkUrl>www.gszx.com.cn</WatermarkUrl>
      </Watermark>
    </Page>
  )
}
